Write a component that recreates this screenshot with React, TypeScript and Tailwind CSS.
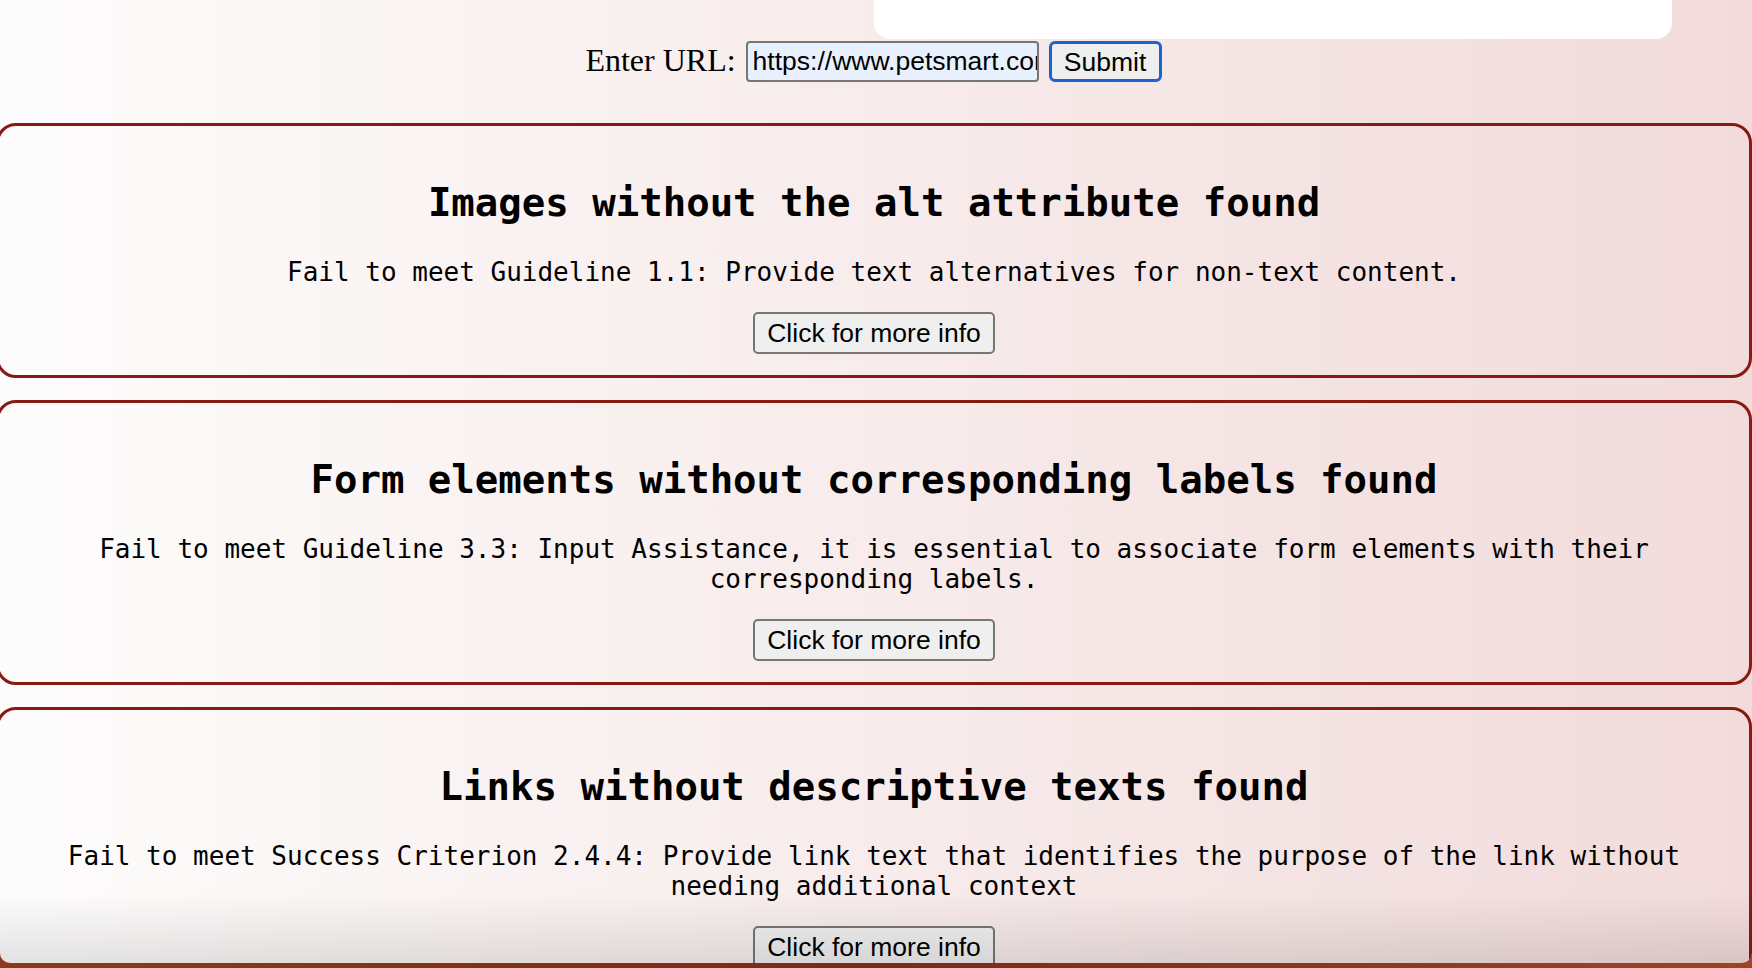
import React from "react";

const cards = [
  {
    title: "Images without the alt attribute found",
    text: "Fail to meet Guideline 1.1: Provide text alternatives for non-text content.",
  },
  {
    title: "Form elements without corresponding labels found",
    text: "Fail to meet Guideline 3.3: Input Assistance, it is essential to associate form elements with their corresponding labels.",
  },
  {
    title: "Links without descriptive texts found",
    text: "Fail to meet Success Criterion 2.4.4: Provide link text that identifies the purpose of the link without needing additional context",
  },
];

function Card({ title, text }: { title: string; text: string }) {
  return (
    <div className="-ml-[4px] border-[3px] border-[#871a12] rounded-[20px] px-[20px] pt-[54px] pb-[21px] flex flex-col items-center text-center text-black font-['DejaVu_Sans_Mono',monospace]">
      <h2 className="text-[39px] leading-[46px] font-bold">{title}</h2>
      <p className="mt-[31px] text-[26px] leading-[30px]">{text}</p>
      <button className="mt-[25px] h-[42px] px-[12px] border-2 border-[#767676] rounded-[5px] bg-[#efefef] text-[26.5px] leading-[30px] text-black font-['Liberation_Sans',Arial,sans-serif]">
        Click for more info
      </button>
    </div>
  );
}

export default function App() {
  return (
    <div className="w-[1752px] h-[968px] overflow-hidden bg-linear-to-r from-[#8d3a1b] via-[#7a2a17] to-[#9b4522]">
      <div className="relative h-[963px] overflow-hidden rounded-b-[10px] bg-linear-to-r from-[#fdfcfc] to-[#f2dbdb]">
        <div className="ml-[874px] w-[798px] h-[39px] bg-white rounded-b-[16px]" />
        <div className="mt-[2px] flex items-center justify-center h-[41px] pr-[5px]">
          <label
            htmlFor="url"
            className="font-['Liberation_Serif','Times_New_Roman',serif] text-[32px] leading-[36px] text-black -mt-[4px]"
          >
            Enter URL:
          </label>
          <input
            id="url"
            readOnly
            value="https://www.petsmart.com/"
            className="ml-[10px] w-[293px] h-[41px] border-2 border-[#767676] rounded-[4px] bg-[#e8f0fe] pl-[5px] outline-none font-['Liberation_Sans',Arial,sans-serif] text-[26.5px] text-black"
          />
          <button className="ml-[10px] w-[113px] h-[41px] border-[3px] border-[#1e63d1] rounded-[6px] bg-[#efefef] font-['Liberation_Sans',Arial,sans-serif] text-[26.5px] leading-[30px] text-black">
            Submit
          </button>
        </div>
        <div className="mt-[41px] flex flex-col gap-[22px]">
          {cards.map((c) => (
            <Card key={c.title} title={c.title} text={c.text} />
          ))}
        </div>
        <div className="pointer-events-none absolute inset-x-0 bottom-0 h-[70px] bg-linear-to-b from-transparent to-[rgba(0,0,0,0.1)]" />
      </div>
    </div>
  );
}
